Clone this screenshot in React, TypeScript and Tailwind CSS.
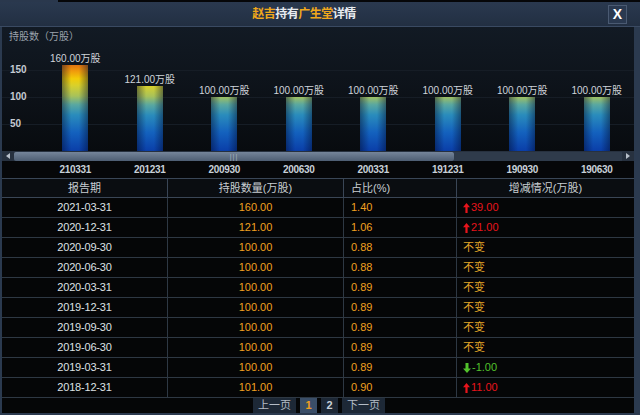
import React from "react";

const FONT = { fontFamily: '"Liberation Sans","Noto Sans CJK SC",sans-serif' };

const bars = [
  { d: "210331", v: 160 },
  { d: "201231", v: 121 },
  { d: "200930", v: 100 },
  { d: "200630", v: 100 },
  { d: "200331", v: 100 },
  { d: "191231", v: 100 },
  { d: "190930", v: 100 },
  { d: "190630", v: 100 },
];

type Row = { date: string; qty: string; pct: string; chg: string; kind: "up" | "down" | "same" };
const rows: Row[] = [
  { date: "2021-03-31", qty: "160.00", pct: "1.40", chg: "39.00", kind: "up" },
  { date: "2020-12-31", qty: "121.00", pct: "1.06", chg: "21.00", kind: "up" },
  { date: "2020-09-30", qty: "100.00", pct: "0.88", chg: "不变", kind: "same" },
  { date: "2020-06-30", qty: "100.00", pct: "0.88", chg: "不变", kind: "same" },
  { date: "2020-03-31", qty: "100.00", pct: "0.89", chg: "不变", kind: "same" },
  { date: "2019-12-31", qty: "100.00", pct: "0.89", chg: "不变", kind: "same" },
  { date: "2019-09-30", qty: "100.00", pct: "0.89", chg: "不变", kind: "same" },
  { date: "2019-06-30", qty: "100.00", pct: "0.89", chg: "不变", kind: "same" },
  { date: "2019-03-31", qty: "100.00", pct: "0.89", chg: "-1.00", kind: "down" },
  { date: "2018-12-31", qty: "101.00", pct: "0.90", chg: "11.00", kind: "up" },
];

const SCALE = 0.54;
const CH = 124;

function UpArrow() {
  return (
    <svg width="7" height="10" viewBox="0 0 7 10" className="mr-[1px]">
      <path d="M3.5 0 L7 4.2 L4.6 4.2 L4.6 10 L2.4 10 L2.4 4.2 L0 4.2 Z" fill="#e8141c" />
    </svg>
  );
}
function DownArrow() {
  return (
    <svg width="8" height="10" viewBox="0 0 8 10" className="mr-[1px]">
      <path d="M4 10 L8 5.6 L5.5 5.6 L5.5 0 L2.5 0 L2.5 5.6 L0 5.6 Z" fill="#52c12c" />
    </svg>
  );
}

export default function App() {
  return (
    <div className="w-[640px] h-[415px] bg-[#2b3a4f] flex flex-col overflow-hidden" style={FONT}>
      {/* top strip */}
      <div className="flex h-[2px] shrink-0">
        <div className="w-[58px] bg-[#2a384d]" />
        <div className="flex-1 bg-[#050608]" />
      </div>
      {/* header */}
      <div className="h-[25px] shrink-0 flex items-center bg-[linear-gradient(to_bottom,#2a394f,#222f42)] border-b border-[#3a4a62]">
        <div className="w-[608px] text-center text-[12px] font-bold leading-none tracking-[-0.5px]">
          <span className="text-[#f0a81c]">赵吉</span>
          <span className="text-[#e8ecf0]">持有</span>
          <span className="text-[#f0a81c]">广生堂</span>
          <span className="text-[#e8ecf0]">详情</span>
        </div>
        <div className="w-[19px] h-[19px] flex items-center justify-center border border-[#4a5a72] bg-[#2a3950] text-white text-[14px] font-bold leading-none">
          X
        </div>
      </div>
      {/* body */}
      <div className="flex-1 flex flex-col ml-[2px] mr-[6px]">
        {/* chart */}
        <div className="relative h-[124px] bg-[linear-gradient(to_bottom,#121a24,#080b0f)]">
          <div className="absolute left-[7px] top-[4px] text-[10px] text-[#9aa2ac] leading-[12px]">持股数（万股）</div>
          {[150, 100, 50].map((v) => (
            <div
              key={v}
              className="absolute left-0 right-0 h-[1px] bg-[#161d26]"
              style={{ top: CH - v * SCALE }}
            />
          ))}
          {[150, 100, 50].map((v) => (
            <div
              key={"l" + v}
              className="absolute left-[8px] text-[10px] font-bold text-[#c4cad2] leading-[10px]"
              style={{ top: CH - v * SCALE - 5 }}
            >
              {v}
            </div>
          ))}
          <div className="absolute inset-0 pl-[36px] flex items-end">
            {bars.map((b) => (
              <div key={b.d} className="w-[75px] flex flex-col items-center justify-end">
                <div className="text-[10px] text-[#cfd4da] leading-[11px] mb-[1px] whitespace-nowrap">
                  {b.v.toFixed(2)}万股
                </div>
                <div
                  className="relative w-[26px] bg-[linear-gradient(to_top,#0a3ea8_0%,#1462be_22%,#2a8cbc_42%,#5aa8a0_54%,#a8c25a_64%,#d8d02c_76%,#f2cc08_84%,#f09a0c_93%,#e07410_100%)] bg-bottom bg-no-repeat bg-[length:100%_86px]"
                  style={{ height: b.v * SCALE }}
                >
                  <div className="absolute inset-0 bg-[linear-gradient(to_right,rgba(0,10,40,0.45),rgba(0,0,0,0)_35%,rgba(0,0,0,0)_65%,rgba(0,10,40,0.45))]" />
                </div>
              </div>
            ))}
          </div>
        </div>
        {/* scrollbar */}
        <div className="h-[10px] flex items-center bg-[#27313f]">
          <div className="w-[12px] flex items-center justify-center">
            <svg width="4" height="6" viewBox="0 0 4 6">
              <path d="M4 0 L0 3 L4 6 Z" fill="#b8c0ca" />
            </svg>
          </div>
          <div className="w-[440px] h-[9px] rounded-[2px] bg-[linear-gradient(to_bottom,#75859a,#4d5d72)] flex items-center justify-center">
            <span className="text-[7px] leading-none text-[#aab4c0] tracking-[1px]">|||</span>
          </div>
          <div className="flex-1 h-[9px] bg-[#2f3b4b]" />
          <div className="w-[12px] flex items-center justify-center">
            <svg width="4" height="6" viewBox="0 0 4 6">
              <path d="M0 0 L4 3 L0 6 Z" fill="#b8c0ca" />
            </svg>
          </div>
        </div>
        {/* x axis */}
        <div className="h-[18px] bg-[#060709] flex items-center pl-[36px] border-b border-[#3a4656]">
          {bars.map((b) => (
            <div key={b.d} className="w-[75px] text-center text-[10px] font-bold text-[#c8d0d8] tracking-[-0.3px]">
              {b.d}
            </div>
          ))}
        </div>
        {/* table */}
        <div className="bg-[#050607] flex flex-col flex-1">
          <div className="h-[19px] grid grid-cols-[166px_176px_113px_1fr] items-center text-[11px] text-[#c8cdd2] bg-[#0a0d11] border-b border-[#3a4656]">
            <div className="text-center h-full flex items-center justify-center border-r border-[#3a4656]">报告期</div>
            <div className="text-center h-full flex items-center justify-center border-r border-[#3a4656]">持股数量(万股)</div>
            <div className="h-full flex items-center pl-[7px] border-r border-[#3a4656]">占比(%)</div>
            <div className="text-center h-full flex items-center justify-center">增减情况(万股)</div>
          </div>
          {rows.map((r) => (
            <div
              key={r.date}
              className="h-[20px] grid grid-cols-[166px_176px_113px_1fr] text-[11px] border-b border-[#2e3843]"
            >
              <div className="flex items-center justify-center text-[#dde1e5] border-r border-[#2e3843] tracking-[-0.2px]">
                {r.date}
              </div>
              <div className="flex items-center justify-center text-[#f0a020] border-r border-[#2e3843]">
                {r.qty}
              </div>
              <div className="flex items-center pl-[7px] text-[#f0a020] border-r border-[#2e3843]">{r.pct}</div>
              <div className="flex items-center pl-[6px]">
                {r.kind === "up" && (
                  <span className="flex items-center text-[#e8141c]">
                    <UpArrow />
                    {r.chg}
                  </span>
                )}
                {r.kind === "down" && (
                  <span className="flex items-center text-[#52c12c]">
                    <DownArrow />
                    {r.chg}
                  </span>
                )}
                {r.kind === "same" && <span className="text-[#e0a428]">{r.chg}</span>}
              </div>
            </div>
          ))}
          {/* pagination */}
          <div className="flex-1 flex items-center justify-center gap-[4px] pl-[2px] text-[11px]">
            <div className="h-[15px] px-[5px] flex items-center bg-[#1d2836] text-[#b4bcc6]">上一页</div>
            <div className="h-[15px] w-[17px] flex items-center justify-center bg-[#3a4e68] text-[#f0a020] font-bold">1</div>
            <div className="h-[15px] w-[17px] flex items-center justify-center bg-[#1d2836] text-[#c8d0d8] font-bold">2</div>
            <div className="h-[15px] px-[5px] flex items-center bg-[#1d2836] text-[#b4bcc6]">下一页</div>
          </div>
        </div>
      </div>
      <div className="h-[2px] shrink-0" />
    </div>
  );
}
